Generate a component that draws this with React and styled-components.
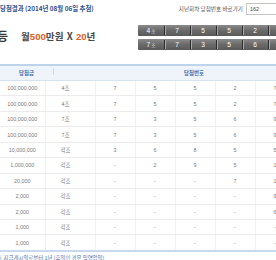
import React from "react";
import styled, { createGlobalStyle } from "styled-components";

const GlobalStyle = createGlobalStyle`
  html, body {
    margin: 0;
    padding: 0;
    background: #fff;
  }
  body {
    width: 276px;
    height: 260px;
    overflow: hidden;
    font-family: "Liberation Sans", "Noto Sans CJK KR", sans-serif;
  }
`;

const Page = styled.div`
  width: 276px;
  height: 260px;
  overflow: hidden;
`;

const TopBar = styled.div`
  display: flex;
  align-items: center;
  justify-content: space-between;
  height: 17px;
`;

const Title = styled.div`
  font-family: "Noto Sans CJK KR", sans-serif;
  font-size: 6.4px;
  font-weight: 700;
  color: #2b4f8e;
  white-space: nowrap;
  margin-top: -1px;
`;

const GoTo = styled.div`
  display: flex;
  align-items: center;
  gap: 3px;
  margin-right: -3px;
`;

const GoLabel = styled.span`
  font-family: "Noto Sans CJK KR", sans-serif;
  font-size: 5.6px;
  color: #555;
  white-space: nowrap;
`;

const RoundInput = styled.div`
  width: 28px;
  height: 10px;
  border: 1px solid #c4c4c4;
  font-size: 5.4px;
  color: #444;
  line-height: 10px;
  padding-left: 3px;
  box-sizing: content-box;
`;

const PrizeLine = styled.div`
  display: flex;
  align-items: center;
  height: 41px;
`;

const Rank = styled.span`
  font-family: "Noto Sans CJK KR", sans-serif;
  font-size: 12px;
  font-weight: 700;
  color: #3a3a3a;
  margin-left: -10px;
  width: 31px;
  flex: none;
  margin-top: -4px;
  white-space: nowrap;
`;

const PrizeText = styled.span`
  font-family: "Noto Sans CJK KR", sans-serif;
  font-size: 9.6px;
  font-weight: 700;
  color: #4a4a4a;
  white-space: nowrap;
  width: 117px;
  flex: none;
  margin-top: -3px;
  word-spacing: 1px;
`;

const Num = styled.span`
  font-family: "Liberation Sans", sans-serif;
  color: #e0601a;
`;

const Bars = styled.div`
  display: flex;
  flex-direction: column;
  gap: 3px;
  flex: none;
`;

const Bar = styled.div`
  display: flex;
  height: 11px;
  width: 150px;
  background: linear-gradient(#8a8a8a, #6a6a6a 50%, #5a5a5a);
  border-radius: 1px;
`;

const BarCell = styled.div`
  position: relative;
  width: 26px;
  flex: none;
  display: flex;
  align-items: center;
  justify-content: center;
  color: #fff;
  font-size: 6.6px;
  &:not(:first-child)::before {
    content: "";
    position: absolute;
    left: 0;
    top: 1px;
    bottom: 1px;
    width: 1px;
    background: #2c2c2c;
    box-shadow: 1px 0 0 #a8a8a8;
  }
`;

const Jo = styled.span`
  font-family: "Noto Sans CJK KR", sans-serif;
  font-size: 4.6px;
  color: #ddd;
  margin-left: 1px;
`;

const TableWrap = styled.div`
  width: 340px;
  margin-top: 6px;
`;

const Head = styled.div`
  display: flex;
  align-items: center;
  height: 14px;
  border-top: 2px solid #bcd3ea;
  border-bottom: 1px solid #d6e2ee;
  background: #eef4fa;
`;

const HeadCell = styled.div`
  position: relative;
  width: ${(p) => p.$w}px;
  text-align: center;
  font-family: "Noto Sans CJK KR", sans-serif;
  font-size: 5.4px;
  font-weight: 700;
  color: #3b63a3;
  ${(p) =>
    p.$sep &&
    `&::before {
      content: "";
      position: absolute;
      left: 0;
      top: -1px;
      height: 7px;
      width: 1px;
      background: #c9d7e6;
    }`}
`;

const Table = styled.table`
  border-collapse: collapse;
  table-layout: fixed;
  width: 340px;
  border-bottom: 2px solid #c6d9ee;
`;

const Cell = styled.td`
  height: 14.45px;
  padding: 0;
  text-align: center;
  font-size: 5.4px;
  color: #7a7a7a;
  border-bottom: 1px solid #ebebeb;
  border-left: 1px solid #f1f1f1;
  &:first-child {
    border-left: none;
  }
`;

const JoCell = styled(Cell)`
  font-family: "Noto Sans CJK KR", sans-serif;
  padding-right: 9px;
`;

const Foot = styled.div`
  font-family: "Noto Sans CJK KR", sans-serif;
  font-size: 5.4px;
  color: #4f72ab;
  margin-top: 2px;
  margin-left: -3px;
  white-space: nowrap;
`;

const rows = [
  ["100,000,000", "4조", "7", "5", "5", "2", "7", "-"],
  ["100,000,000", "4조", "7", "5", "5", "2", "7", "-"],
  ["100,000,000", "7조", "7", "3", "5", "6", "9", "-"],
  ["100,000,000", "7조", "7", "3", "5", "6", "9", "-"],
  ["10,000,000", "각조", "3", "6", "8", "5", "5", "-"],
  ["1,000,000", "각조", "-", "2", "9", "5", "1", "-"],
  ["20,000", "각조", "-", "-", "-", "7", "1", "-"],
  ["2,000", "각조", "-", "-", "-", "-", "9", "-"],
  ["2,000", "각조", "-", "-", "-", "-", "6", "-"],
  ["1,000", "각조", "-", "-", "-", "-", "-", "-"],
  ["1,000", "각조", "-", "-", "-", "-", "-", "-"],
];

const bars = [
  ["4", "7", "5", "5", "2", "7"],
  ["7", "7", "3", "5", "6", "9"],
];

const colWidths = [45, 50, 40, 40, 40, 40, 40, 45];

export default function App() {
  return (
    <Page>
      <GlobalStyle />
      <TopBar>
        <Title>당첨결과 (2014년 08월 06일 추첨)</Title>
        <GoTo>
          <GoLabel>지난회차 당첨번호 바로가기</GoLabel>
          <RoundInput>162</RoundInput>
        </GoTo>
      </TopBar>
      <PrizeLine>
        <Rank>1등</Rank>
        <PrizeText>
          월<Num>500</Num>만원 X <Num>20</Num>년
        </PrizeText>
        <Bars>
          {bars.map((b, i) => (
            <Bar key={i}>
              {b.map((n, j) => (
                <BarCell key={j}>
                  {n}
                  {j === 0 && <Jo>조</Jo>}
                </BarCell>
              ))}
            </Bar>
          ))}
        </Bars>
      </PrizeLine>
      <TableWrap>
        <Head>
          <HeadCell $w={53}>당첨금</HeadCell>
          <HeadCell $w={282} $sep>
            당첨번호
          </HeadCell>
        </Head>
        <Table>
          <colgroup>
            {colWidths.map((w, i) => (
              <col key={i} style={{ width: w }} />
            ))}
          </colgroup>
          <tbody>
            {rows.map((r, i) => (
              <tr key={i}>
                {r.map((v, j) =>
                  j === 1 ? (
                    <JoCell key={j}>{v}</JoCell>
                  ) : (
                    <Cell key={j}>{v}</Cell>
                  )
                )}
              </tr>
            ))}
          </tbody>
        </Table>
        <Foot>※ 지급게시일로부터 1년 (휴일인 경우 익영업일)</Foot>
      </TableWrap>
    </Page>
  );
}
